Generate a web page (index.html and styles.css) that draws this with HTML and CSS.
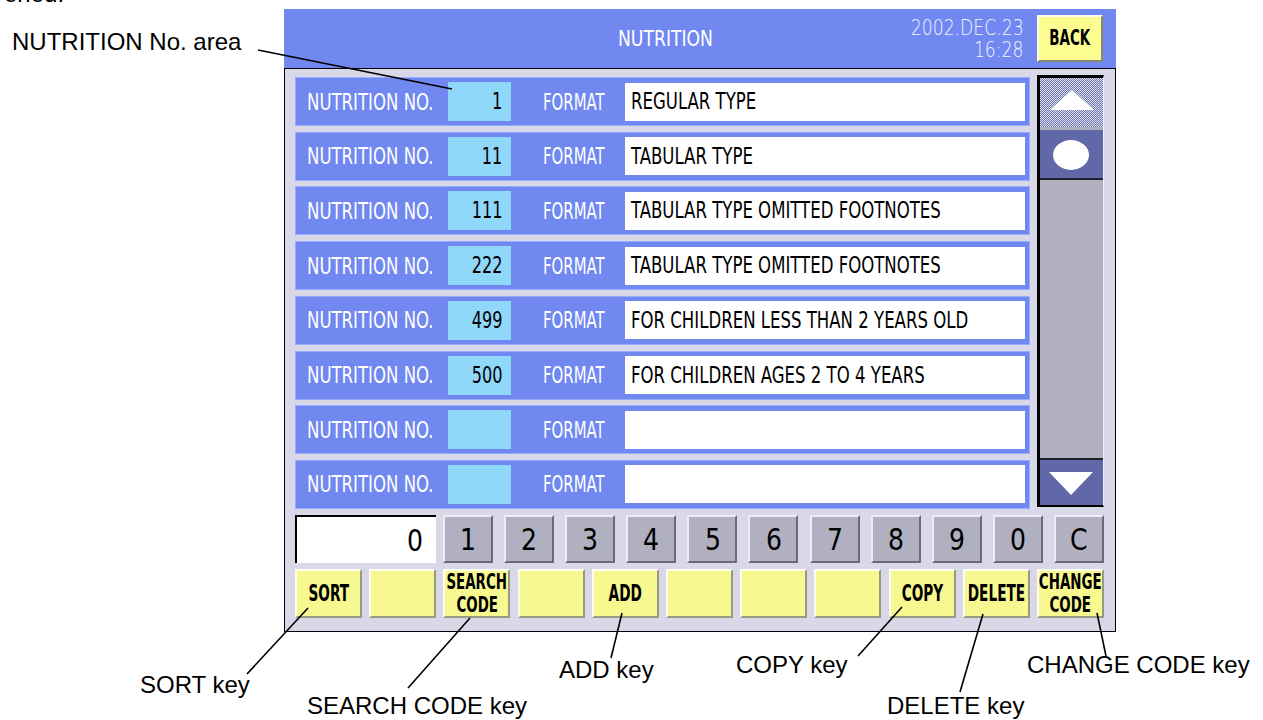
FILE: index.html
```html
<!DOCTYPE html>
<html>
<head>
    <title>Nutrition</title>
    <meta name="viewport" content="width=device-width, initial-scale=1">
    <link rel="stylesheet" href="styles.css">
</head>
<body>
<div class="page">
    <span class="note note-cut">ened.</span>

    <div class="screen">
        <div class="topbar">
            <div class="title"><span class="sq sq-title">NUTRITION</span></div>
            <div class="clock">
                <span class="sq-clock">2002.DEC.23</span>
                <span class="sq-clock">16:28</span>
            </div>
            <div class="back"><span class="sq sq-back">BACK</span></div>
        </div>

        <div class="body">
            <div class="main">
                <div class="list">
                    <div class="row">
                        <div class="row-label"><span class="sq">NUTRITION NO.</span></div>
                        <div class="row-no"><span class="sq-no">1</span></div>
                        <div class="row-fmt"><span class="sq sq-fmt">FORMAT</span></div>
                        <div class="row-field"><span class="sq">REGULAR TYPE</span></div>
                    </div>
                    <div class="row">
                        <div class="row-label"><span class="sq">NUTRITION NO.</span></div>
                        <div class="row-no"><span class="sq-no">11</span></div>
                        <div class="row-fmt"><span class="sq sq-fmt">FORMAT</span></div>
                        <div class="row-field"><span class="sq">TABULAR TYPE</span></div>
                    </div>
                    <div class="row">
                        <div class="row-label"><span class="sq">NUTRITION NO.</span></div>
                        <div class="row-no"><span class="sq-no">111</span></div>
                        <div class="row-fmt"><span class="sq sq-fmt">FORMAT</span></div>
                        <div class="row-field"><span class="sq">TABULAR TYPE OMITTED FOOTNOTES</span></div>
                    </div>
                    <div class="row">
                        <div class="row-label"><span class="sq">NUTRITION NO.</span></div>
                        <div class="row-no"><span class="sq-no">222</span></div>
                        <div class="row-fmt"><span class="sq sq-fmt">FORMAT</span></div>
                        <div class="row-field"><span class="sq">TABULAR TYPE OMITTED FOOTNOTES</span></div>
                    </div>
                    <div class="row">
                        <div class="row-label"><span class="sq">NUTRITION NO.</span></div>
                        <div class="row-no"><span class="sq-no">499</span></div>
                        <div class="row-fmt"><span class="sq sq-fmt">FORMAT</span></div>
                        <div class="row-field"><span class="sq">FOR CHILDREN LESS THAN 2 YEARS OLD</span></div>
                    </div>
                    <div class="row">
                        <div class="row-label"><span class="sq">NUTRITION NO.</span></div>
                        <div class="row-no"><span class="sq-no">500</span></div>
                        <div class="row-fmt"><span class="sq sq-fmt">FORMAT</span></div>
                        <div class="row-field"><span class="sq">FOR CHILDREN AGES 2 TO 4 YEARS</span></div>
                    </div>
                    <div class="row">
                        <div class="row-label"><span class="sq">NUTRITION NO.</span></div>
                        <div class="row-no"></div>
                        <div class="row-fmt"><span class="sq sq-fmt">FORMAT</span></div>
                        <div class="row-field"></div>
                    </div>
                    <div class="row">
                        <div class="row-label"><span class="sq">NUTRITION NO.</span></div>
                        <div class="row-no"></div>
                        <div class="row-fmt"><span class="sq sq-fmt">FORMAT</span></div>
                        <div class="row-field"></div>
                    </div>
                </div>

                <div class="scroll">
                    <div class="sb-up">
                        <svg width="63" height="49" viewBox="0 0 63 49"><polygon points="32,12 10,32 54,32" fill="#fff"/></svg>
                    </div>
                    <div class="sb-thumb">
                        <svg width="63" height="48" viewBox="0 0 63 48"><ellipse cx="31" cy="25" rx="18" ry="15" fill="#fff"/></svg>
                    </div>
                    <div class="sb-track"></div>
                    <div class="sb-down">
                        <svg width="63" height="45" viewBox="0 0 63 45"><polygon points="9,12 53,12 31,35" fill="#fff"/></svg>
                    </div>
                </div>
            </div>

            <div class="pad">
                <div class="pad-display"><span class="sq-digit">0</span></div>
                <div class="pad-keys">
                    <div class="key"><span class="sq-digit">1</span></div>
                    <div class="key"><span class="sq-digit">2</span></div>
                    <div class="key"><span class="sq-digit">3</span></div>
                    <div class="key"><span class="sq-digit">4</span></div>
                    <div class="key"><span class="sq-digit">5</span></div>
                    <div class="key"><span class="sq-digit">6</span></div>
                    <div class="key"><span class="sq-digit">7</span></div>
                    <div class="key"><span class="sq-digit">8</span></div>
                    <div class="key"><span class="sq-digit">9</span></div>
                    <div class="key"><span class="sq-digit">0</span></div>
                    <div class="key"><span class="sq-digit">C</span></div>
                </div>
            </div>

            <div class="fn">
                <div class="fkey"><span class="sq-key">SORT</span></div>
                <div class="fkey"></div>
                <div class="fkey fkey-2"><span class="sq-key2">SEARCH</span><span class="sq-key2">CODE</span></div>
                <div class="fkey"></div>
                <div class="fkey"><span class="sq-key">ADD</span></div>
                <div class="fkey"></div>
                <div class="fkey"></div>
                <div class="fkey"></div>
                <div class="fkey"><span class="sq-key">COPY</span></div>
                <div class="fkey"><span class="sq-key">DELETE</span></div>
                <div class="fkey fkey-2"><span class="sq-key2">CHANGE</span><span class="sq-key2">CODE</span></div>
            </div>
        </div>
    </div>

    <!-- callout leaders -->
    <svg class="leaders" width="1263" height="720" viewBox="0 0 1263 720">
        <g stroke="#000" stroke-width="1.6" fill="none">
            <line x1="258" y1="50" x2="452" y2="89"/>
            <line x1="247" y1="674" x2="308" y2="608"/>
            <line x1="408" y1="688" x2="470" y2="618"/>
            <line x1="611" y1="658" x2="622" y2="613"/>
            <line x1="858" y1="656" x2="902" y2="607"/>
            <line x1="960" y1="692" x2="983" y2="614"/>
            <line x1="1106" y1="656" x2="1097" y2="613"/>
        </g>
    </svg>

    <span class="note note-area">NUTRITION No. area</span>
    <span class="note note-sort">SORT key</span>
    <span class="note note-search">SEARCH CODE key</span>
    <span class="note note-add">ADD key</span>
    <span class="note note-copy">COPY key</span>
    <span class="note note-delete">DELETE key</span>
    <span class="note note-change">CHANGE CODE key</span>
</div>
</body>
</html>
```

FILE: styles.css
```css
* {
    box-sizing: border-box;
}

body {
    margin: 0;
    background-color: #ffffff;
    color: #000;
    font-family: "Liberation Sans", Arial, sans-serif;
}

.page {
    position: relative;
    width: 1263px;
    height: 720px;
    overflow: hidden;
    padding: 9px 0 0 284px;
}

/* ---- scale screen ---- */

.screen {
    width: 832px;
    font-family: "DejaVu Sans Condensed", "DejaVu Sans", sans-serif;
    font-stretch: condensed;
}

.sq, .sq-no, .sq-clock, .sq-digit, .sq-key, .sq-key2 {
    display: inline-block;
    white-space: nowrap;
    line-height: 1;
}

.sq {
    transform: scaleX(.8);
    transform-origin: left center;
}

.topbar {
    height: 59px;
    background-color: #7088f0;
    color: #fff;
    display: flex;
    align-items: center;
}

.title {
    flex: 1;
    padding-left: 334px;
    font-size: 21px;
}

.sq-title {
    transform: scaleX(.91);
}

.clock {
    display: flex;
    flex-direction: column;
    align-items: flex-end;
    gap: 2px;
    margin-right: 13px;
    font-family: "DejaVu Sans", sans-serif;
    font-stretch: normal;
    font-weight: 200;
    font-size: 21px;
    color: #f4f4ff;
}

.sq-clock {
    line-height: 20px;
    transform: scaleX(.82);
    transform-origin: right center;
}

.back {
    width: 66px;
    height: 47px;
    margin-right: 13px;
    background-color: #fcfc90;
    border: 2px solid;
    border-color: #ffffe8 #8a8a70 #8a8a70 #ffffe8;
    color: #000;
    font-size: 21px;
    font-weight: bold;
    display: flex;
    align-items: center;
    justify-content: center;
}

.sq-back {
    transform: scaleX(.71);
    transform-origin: center;
}

.body {
    height: 564px;
    background-color: #d8d8e8;
    border: 1px solid #000;
    padding: 8px 11px 0 10px;
}

.main {
    display: flex;
    gap: 7px;
    height: 432px;
}

.list {
    flex: 1;
    min-width: 0;
    display: flex;
    flex-direction: column;
    justify-content: space-between;
}

.row {
    height: 49px;
    background-color: #7088f0;
    border: 1px solid #98acff;
    display: flex;
    align-items: center;
    padding-left: 11px;
    font-size: 23px;
    color: #fff;
}

.row-label {
    width: 141px;
    flex-shrink: 0;
}

.row-no {
    width: 63px;
    height: 39px;
    flex-shrink: 0;
    background-color: #90d8fa;
    color: #000;
    display: flex;
    align-items: center;
    justify-content: flex-end;
    padding-right: 9px;
}

.sq-no {
    transform: scaleX(.78);
    transform-origin: right center;
}

.row-fmt {
    width: 114px;
    flex-shrink: 0;
    padding-left: 32px;
}

.sq-fmt {
    transform: scaleX(.72);
}

.row-field {
    flex: 1;
    min-width: 0;
    height: 38px;
    margin-right: 4px;
    background-color: #fff;
    color: #000;
    display: flex;
    align-items: center;
    padding-left: 6px;
    white-space: nowrap;
}

.scroll {
    width: 67px;
    flex-shrink: 0;
    height: 432px;
    margin-top: -2px;
    border-left: 3px solid #000;
    border-top: 3px solid #000;
    border-bottom: 2px solid #000;
    border-right: 1px solid #f0f0f8;
    background-color: #b0b0c0;
    display: flex;
    flex-direction: column;
}

.sb-up {
    height: 49px;
    background: repeating-conic-gradient(#7078b0 0 25%, #dcdcec 0 50%) 0 0 / 2px 2px;
}

.sb-thumb {
    height: 50px;
    margin-top: 3px;
    background-color: #6068a8;
    border-bottom: 2px solid #202030;
}

.sb-track {
    flex: 1;
}

.sb-down {
    height: 47px;
    background-color: #6068a8;
    border-top: 2px solid #202030;
}

.scroll svg {
    display: block;
}

.pad {
    display: flex;
    gap: 7px;
    height: 48px;
    margin-top: 6px;
}

.pad-display {
    width: 141px;
    background-color: #fff;
    border-top: 2px solid #000;
    border-left: 2px solid #000;
    display: flex;
    align-items: center;
    justify-content: flex-end;
    padding-right: 12px;
    font-size: 31px;
}

.pad-keys {
    flex: 1;
    display: flex;
    justify-content: space-between;
}

.key {
    width: 50px;
    background-color: #b0b0c0;
    border: 2px solid;
    border-color: #ececf4 #6a6a7a #6a6a7a #ececf4;
    display: flex;
    align-items: center;
    justify-content: center;
    font-size: 31px;
}

.sq-digit {
    transform: scaleX(.9);
    transform-origin: center;
}

.fn {
    display: flex;
    justify-content: space-between;
    height: 49px;
    margin-top: 6px;
}

.fkey {
    width: 67px;
    background-color: #f8f890;
    border: 2px solid;
    border-color: #fffff0 #9a9a80 #9a9a80 #fffff0;
    display: flex;
    flex-direction: column;
    align-items: center;
    justify-content: center;
    font-weight: bold;
}

.sq-key {
    font-size: 23px;
    transform: scaleX(.66);
    transform-origin: center;
}

.sq-key2 {
    font-size: 21px;
    line-height: 23px;
    transform: scaleX(.71);
    transform-origin: center;
}

/* ---- callouts ---- */

.leaders {
    position: absolute;
    top: 0;
    left: 0;
    pointer-events: none;
}

.note {
    position: absolute;
    font-size: 24px;
    line-height: 1;
    white-space: nowrap;
}

.note-cut { left: 4px; top: -18px; }
.note-area { left: 12px; top: 30px; }
.note-sort { left: 140px; top: 673px; }
.note-search { left: 307px; top: 694px; }
.note-add { left: 559px; top: 658px; }
.note-copy { left: 736px; top: 653px; }
.note-delete { left: 887px; top: 694px; }
.note-change { left: 1027px; top: 653px; }
```
